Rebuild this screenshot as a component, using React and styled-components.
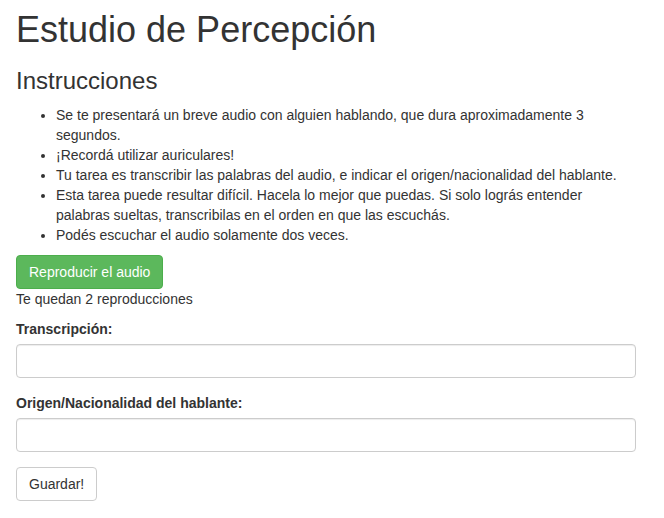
import React, { useState } from 'react';
import styled, { createGlobalStyle } from 'styled-components';

const GlobalStyle = createGlobalStyle`
  * {
    box-sizing: border-box;
  }
  body {
    margin: 0;
    background: #fff;
    font-family: "Liberation Sans", Arial, sans-serif;
    font-size: 14px;
    line-height: 20px;
    color: #333;
  }
`;

const Page = styled.div`
  padding: 0 28px 0 16px;
  display: flex;
  flex-direction: column;
  align-items: flex-start;
`;

const Title = styled.h1`
  font-size: 36px;
  font-weight: 500;
  line-height: 1.1;
  margin: 10px 0 10px;
`;

const Subtitle = styled.h3`
  font-size: 24px;
  font-weight: 500;
  line-height: 1.1;
  margin: 8px 0 11px;
`;

const List = styled.ul`
  margin: 0 0 10px;
  padding-left: 40px;
  align-self: stretch;
`;

const Button = styled.button`
  display: inline-block;
  height: 34px;
  padding: 6px 12px;
  font-family: inherit;
  font-size: 14px;
  line-height: 20px;
  border-radius: 4px;
  cursor: pointer;
  border: 1px solid ${(p) => (p.$success ? '#4cae4c' : '#ccc')};
  background: ${(p) => (p.$success ? '#5cb85c' : '#fff')};
  color: ${(p) => (p.$success ? '#fff' : '#333')};
`;

const Note = styled.p`
  margin: 0 0 10px;
`;

const FormGroup = styled.div`
  margin-bottom: 15px;
  align-self: stretch;
  display: flex;
  flex-direction: column;
  align-items: flex-start;
`;

const Label = styled.label`
  font-weight: bold;
  margin-bottom: 5px;
`;

const Input = styled.input`
  width: 100%;
  height: 34px;
  padding: 6px 12px;
  font-family: inherit;
  font-size: 14px;
  color: #555;
  background: #fff;
  border: 1px solid #ccc;
  border-radius: 4px;
  box-shadow: inset 0 1px 1px rgba(0, 0, 0, 0.075);
  outline: none;
`;

const App = () => {
  const [plays, setPlays] = useState(2);
  const [transcription, setTranscription] = useState('');
  const [origin, setOrigin] = useState('');

  return (
    <>
      <GlobalStyle />
      <Page>
        <Title>Estudio de Percepción</Title>
        <Subtitle>Instrucciones</Subtitle>
        <List>
          <li>Se te presentará un breve audio con alguien hablando, que dura aproximadamente 3 segundos.</li>
          <li>¡Recordá utilizar auriculares!</li>
          <li>Tu tarea es transcribir las palabras del audio, e indicar el origen/nacionalidad del hablante.</li>
          <li>
            Esta tarea puede resultar difícil. Hacela lo mejor que puedas. Si solo lográs entender palabras sueltas,
            transcribilas en el orden en que las escuchás.
          </li>
          <li>Podés escuchar el audio solamente dos veces.</li>
        </List>
        <Button $success onClick={() => plays > 0 && setPlays(plays - 1)}>
          Reproducir el audio
        </Button>
        <Note>Te quedan {plays} reproducciones</Note>
        <FormGroup>
          <Label htmlFor="transcripcion">Transcripción:</Label>
          <Input id="transcripcion" value={transcription} onChange={(e) => setTranscription(e.target.value)} />
        </FormGroup>
        <FormGroup>
          <Label htmlFor="origen">Origen/Nacionalidad del hablante:</Label>
          <Input id="origen" value={origin} onChange={(e) => setOrigin(e.target.value)} />
        </FormGroup>
        <Button>Guardar!</Button>
      </Page>
    </>
  );
};

export default App;
